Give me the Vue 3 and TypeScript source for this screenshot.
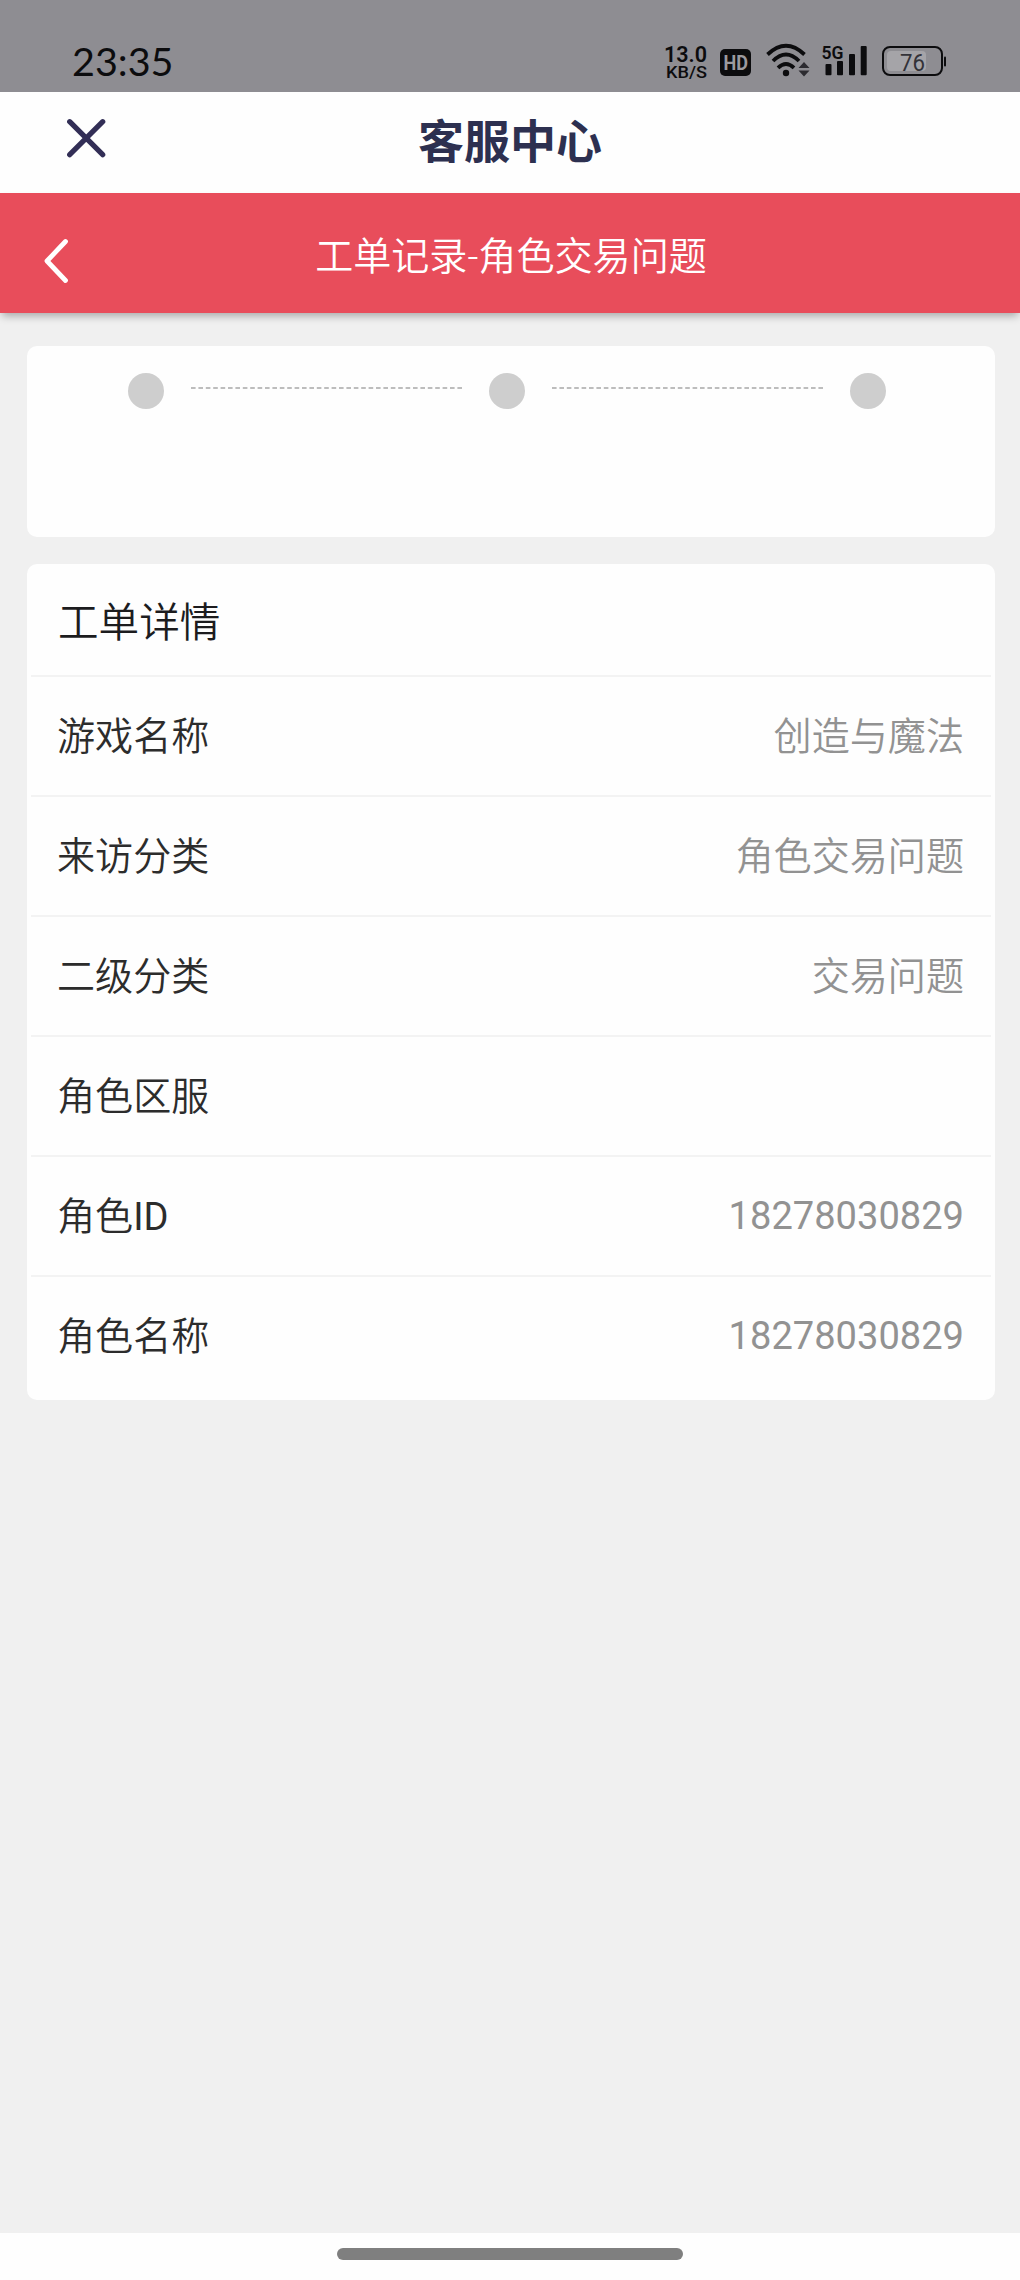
<script setup lang="ts">
interface DetailRow {
  label: string
  latin?: string
  value: string
  numeric?: boolean
}

const rows: DetailRow[] = [
  { label: '游戏名称', value: '创造与魔法' },
  { label: '来访分类', value: '角色交易问题' },
  { label: '二级分类', value: '交易问题' },
  { label: '角色区服', value: '' },
  { label: '角色', latin: 'ID', value: '18278030829', numeric: true },
  { label: '角色名称', value: '18278030829', numeric: true },
]
</script>

<template>
  <div class="screen">
    <div class="status">
      <span class="clock">23:35</span>
      <svg class="indicators" width="290" height="50" viewBox="660 36 290 50">
        <g fill="#0c0c0e">
          <text x="664" y="62" font-size="22.500" font-weight="600" textLength="43" lengthAdjust="spacingAndGlyphs">13.0</text>
          <text x="666" y="78.300" font-size="16.300" font-weight="500" textLength="41" lengthAdjust="spacingAndGlyphs">KB/S</text>
          <rect x="720" y="49" width="31" height="27" rx="5" />
          <text x="723.500" y="70" font-size="20" font-weight="700" fill="#9b9a9f" textLength="24.500" lengthAdjust="spacingAndGlyphs">HD</text>
          <circle cx="786" cy="73" r="3.2" />
          <path d="M798.5 68l5.500-6 5.500 6zM798.5 70.5l5.500 6 5.500-6z" fill="#2c2b30" />
          <text x="821.5" y="59" font-size="19" font-weight="600" textLength="22" lengthAdjust="spacingAndGlyphs">5G</text>
          <rect x="825.500" y="64" width="6" height="11.300" rx="1" />
          <rect x="837" y="61" width="6" height="14.300" rx="1" />
          <rect x="849" y="54" width="6" height="21.300" rx="1" />
          <rect x="860.700" y="46" width="6" height="29.300" rx="1" />
          <rect x="944" y="56.500" width="2" height="10" rx="1" />
        </g>
        <g fill="none" stroke="#0c0c0e" stroke-width="3.800">
          <path d="M767.500 54.500Q786 37 804.500 54.500" />
          <path d="M773 61Q786 48 799 61" />
          <path d="M778 67.800Q786 60 794 67.800" />
        </g>
        <rect x="887" y="51" width="39" height="20" rx="4" fill="#a5a4a8" />
        <rect x="883" y="47" width="59" height="28" rx="7" fill="none" stroke="#0c0c0e" stroke-width="2" />
        <text x="900" y="70.500" font-size="24" fill="#333238" textLength="25" lengthAdjust="spacingAndGlyphs">76</text>
      </svg>
    </div>

    <header class="app-bar">
      <svg class="close" width="40" height="40" viewBox="0 0 40 40">
        <path d="M3.700 3.700L36.700 36.700M36.700 3.700L3.700 36.700" fill="none" stroke="#322e56" stroke-width="5.200" stroke-linecap="round" />
      </svg>
      <h1>客服中心</h1>
    </header>

    <nav class="page-bar">
      <svg class="back" width="30" height="50" viewBox="0 0 30 50">
        <path d="M24.500 5.500L6 25L24.500 44.500" fill="none" stroke="#fff" stroke-width="4.800" stroke-linecap="round" stroke-linejoin="round" />
      </svg>
      <h2>工单记录-角色交易问题</h2>
    </nav>

    <main>
      <section class="card steps">
        <template v-for="n in 3" :key="n">
          <i class="dot"></i>
          <svg v-if="n < 3" class="track" width="273" height="2" viewBox="0 0 273 2">
            <path d="M1 1H273" stroke="#bdbdbd" stroke-width="2" stroke-dasharray="4.600 2.800" />
          </svg>
        </template>
      </section>

      <section class="card details">
        <h3>工单详情</h3>
        <div v-for="row in rows" :key="row.label" class="row">
          <span class="label">{{ row.label }}<span v-if="row.latin" class="latin">{{ row.latin }}</span></span>
          <span class="value" :class="{ numeric: row.numeric }">{{ row.value }}</span>
        </div>
      </section>
    </main>

    <footer><i class="handle"></i></footer>
  </div>
</template>

<style>
body {
  margin: 0;
}
</style>

<style scoped>
.screen {
  display: flex;
  flex-direction: column;
  width: 1020px;
  height: 2280px;
  overflow: hidden;
  background: #f0f0f0;
  font-family: Roboto, "Noto Sans CJK SC", sans-serif;
}
h1, h2, h3 {
  margin: 0;
  font-weight: 350;
}
.status {
  box-sizing: border-box;
  display: flex;
  align-items: flex-start;
  justify-content: space-between;
  height: 92px;
  padding: 36px 70px 0 72px;
  background: #8e8d92;
}
.clock {
  padding-top: 3px;
  font: 39.5px/44px Lato, sans-serif;
  color: #0c0c0e;
}
.indicators {
  display: block;
  font-family: Roboto, sans-serif;
}
.app-bar {
  display: grid;
  grid-template-columns: 120px 1fr 120px;
  align-items: center;
  height: 101px;
  background: #fefefe;
}
.close {
  margin: -9px 0 0 66px;
}
h1 {
  font-size: 46px;
  line-height: 60px;
  font-weight: 700;
  text-align: center;
  color: #2d3050;
  padding-bottom: 2px;
}
.page-bar {
  display: grid;
  grid-template-columns: 120px 1fr 120px;
  align-items: center;
  height: 120px;
  background: #e84d5b;
  box-shadow: 0 5px 8px -2px rgba(0, 0, 0, 0.3);
}
.back {
  margin: 15px 0 0 41px;
}
h2 {
  padding: 7px 0 0 2px;
  font-size: 38.1px;
  line-height: 50px;
  text-align: center;
  color: #fff;
}
main {
  display: flex;
  flex-direction: column;
  gap: 27px;
  flex: 1;
  padding: 33px 25px 0 27px;
}
.card {
  box-sizing: border-box;
  border-radius: 10px;
  background: #fefefe;
}
.steps {
  display: flex;
  align-items: flex-start;
  gap: 26px;
  height: 191px;
  padding: 27px 0 0 101px;
}
.dot {
  flex: none;
  width: 36px;
  height: 36px;
  border-radius: 50%;
  background: #cecece;
}
.track {
  flex: none;
  margin-top: 14px;
}
.details {
  height: 836px;
  padding: 0 4px;
}
h3 {
  height: 111px;
  padding: 0 27px;
  font-size: 40.6px;
  line-height: 118px;
  color: #1c1c1e;
}
.row {
  box-sizing: border-box;
  display: flex;
  justify-content: space-between;
  height: 120px;
  padding: 0 27px 0 26px;
  border-top: 2px solid #f3f3f3;
  font-size: 38.1px;
  font-weight: 350;
  line-height: 121px;
}
.label {
  color: #2c2c2c;
}
.latin {
  font-weight: 400;
}
.value {
  color: #929292;
}
.numeric {
  font-weight: 400;
  line-height: 119px;
}
footer {
  display: flex;
  justify-content: center;
  align-items: flex-start;
  height: 47px;
  background: #fefefe;
}
.handle {
  width: 346px;
  height: 12px;
  margin-top: 15px;
  border-radius: 6px;
  background: #7f7f7f;
}
</style>
